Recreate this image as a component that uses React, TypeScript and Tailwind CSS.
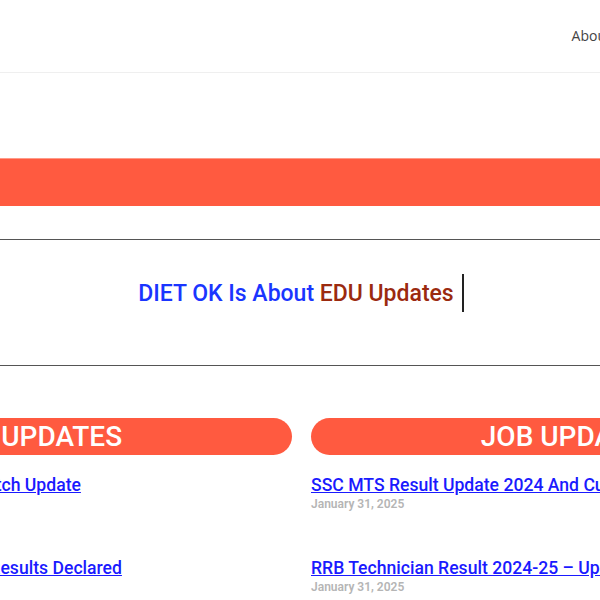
import React from 'react';

const eduPosts = [
  { id: 1, title: 'Odisha OTET Exam 2025 Match Update', date: 'January 31, 2025' },
  { id: 2, title: 'Odisha Plus Two 2025 Arts Results Declared', date: 'January 31, 2025' },
];

const jobPosts = [
  { id: 1, title: 'SSC MTS Result Update 2024 And Cut Off Marks', date: 'January 31, 2025' },
  { id: 2, title: 'RRB Technician Result 2024-25 – Update Soon', date: 'January 31, 2025' },
];

const PostColumn: React.FC<{ heading: string; posts: { id: number; title: string; date: string }[] }> = ({ heading, posts }) => (
  <div>
    <div className="h-[37px] rounded-full bg-[#ff5a40] text-white text-[28px] font-medium leading-[37px] text-center whitespace-nowrap overflow-hidden">
      {heading}
    </div>
    <div className="mt-[20px] space-y-[46px]">
      {posts.map(post => (
        <div key={post.id} className="whitespace-nowrap">
          <a href="#" className="block text-[17.6px] leading-[20px] font-medium text-[#1a1aff] underline">
            {post.title}
          </a>
          <div className="mt-[1px] text-[12px] leading-[16px] font-semibold text-[#b5b5b5]">
            {post.date}
          </div>
        </div>
      ))}
    </div>
  </div>
);

export default function App() {
  return (
    <div className="w-[600px] h-[600px] overflow-hidden bg-white font-['Roboto',sans-serif]">
      {/* Header */}
      <header className="h-[73px] border-b border-[#efefef] flex items-center justify-end">
        <nav className="flex gap-6 text-[14px] text-[#444] font-['Open_Sans',sans-serif] -mr-[11px] mt-[-2px]">
          <a href="#">About</a>
        </nav>
      </header>

      {/* Banner strip */}
      <div className="mt-[85px] h-[48px] bg-[#ff5a40] border-t border-[#ff9a88]"></div>

      {/* Hero */}
      <section className="mt-[33px] h-[127px] border-y border-[#555] flex items-center justify-center">
        <div className="flex items-center gap-[8px] mt-[-16px] ml-[2px]">
          <h1 className="text-[23px] font-medium">
            <span className="text-[#1a35ff]">DIET OK Is About </span>
            <span className="text-[#9b2a0f]">EDU Updates</span>
          </h1>
          <span className="w-[2px] h-[38px] bg-[#222] -mt-[4px]"></span>
        </div>
      </section>

      {/* Posts */}
      <section className="mt-[52px] w-[1059px] ml-[-228px] grid grid-cols-2 gap-[19px]">
        <PostColumn heading="EDU UPDATES" posts={eduPosts} />
        <PostColumn heading="JOB UPDATES" posts={jobPosts} />
      </section>
    </div>
  );
}
